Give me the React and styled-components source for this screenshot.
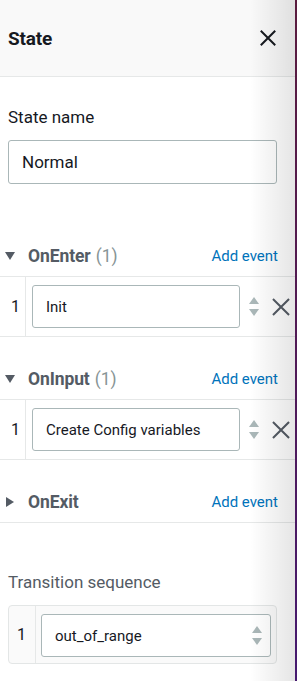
import React from 'react';
import styled, { createGlobalStyle } from 'styled-components';

const GlobalStyle = createGlobalStyle`
  html, body {
    margin: 0;
    padding: 0;
    background: #ffffff;
  }
  body {
    font-family: Roboto, "Noto Sans", sans-serif;
    color: #16191f;
  }
`;

const Screen = styled.div`
  display: flex;
  width: 300px;
  height: 681px;
  overflow: hidden;
`;

const Panel = styled.div`
  position: relative;
  width: 295px;
  height: 681px;
  background: #ffffff;

  &::after {
    content: '';
    position: absolute;
    top: 0;
    right: 0;
    width: 45px;
    height: 100%;
    pointer-events: none;
    background: linear-gradient(90deg, rgba(0, 0, 0, 0) 0%, rgba(0, 0, 0, 0.1) 100%);
  }
`;

const Edge = styled.div`
  width: 2px;
  height: 681px;
  background: linear-gradient(180deg, #5a1b3e 0%, #4f1a5a 60%, #461a70 100%);
`;

const Header = styled.header`
  display: flex;
  align-items: center;
  justify-content: space-between;
  height: 76px;
  padding: 0 19px 0 8px;
  background: #f9f9f9;
  border-bottom: 1px solid #e6e8e8;
`;

const Title = styled.h1`
  margin: 0;
  font-size: 19px;
  font-weight: 700;
  letter-spacing: -0.2px;
  color: #16191f;
`;

const Body = styled.div`
  padding-top: 30px;
`;

const Field = styled.div`
  padding: 0 18px 0 8px;
`;

const Label = styled.div`
  font-size: 17px;
  line-height: 20px;
  color: ${p => (p.$muted ? '#545b64' : '#16191f')};
  margin-bottom: 13px;
`;

const TextBox = styled.div`
  display: flex;
  align-items: center;
  height: 44px;
  box-sizing: border-box;
  padding: 0 13px;
  border: 1px solid #aab7b8;
  border-radius: 3px;
  font-size: 17px;
  color: #16191f;
  background: #ffffff;
`;

const Section = styled.section`
  margin-top: ${p => p.$top}px;
`;

const SectionHead = styled.div`
  display: flex;
  align-items: center;
  height: 28px;
  padding: 0 17px 6px 5px;
  border-bottom: 1px solid #e6e8e8;
`;

const Caret = styled.span`
  display: inline-flex;
  width: 10px;
  margin-right: 13px;
`;

const HeadName = styled.span`
  font-size: 17.5px;
  font-weight: 700;
  color: #545b64;
  letter-spacing: -0.1px;
`;

const Count = styled.span`
  font-size: 17.5px;
  color: #879596;
  margin-left: 5px;
`;

const AddLink = styled.a`
  margin-left: auto;
  font-size: 15px;
  color: #0073bb;
  text-decoration: none;
`;

const EventRow = styled.div`
  display: flex;
  align-items: stretch;
  height: 59px;
  border-bottom: 1px solid #e6e8e8;
`;

const Index = styled.div`
  display: flex;
  align-items: center;
  justify-content: flex-end;
  width: ${p => p.$w}px;
  padding-right: ${p => p.$pr}px;
  box-sizing: border-box;
  border-right: 1px solid #e6e8e8;
  font-size: 16px;
  color: #16191f;
`;

const EventInput = styled.div`
  display: flex;
  align-items: center;
  width: 208px;
  height: 43px;
  margin: 8px 0 0 6px;
  box-sizing: border-box;
  padding: 0 13px;
  border: 1px solid #aab7b8;
  border-radius: 3px;
  font-size: 15px;
  color: #16191f;
`;

const Spinner = styled.div`
  display: flex;
  flex-direction: column;
  justify-content: center;
  gap: 5px;
  margin-left: ${p => p.$ml};
`;

const RemoveBtn = styled.button`
  display: flex;
  align-items: center;
  border: 0;
  background: none;
  padding: 0;
  margin-left: 13px;
  cursor: pointer;
`;

const SeqBox = styled.div`
  display: flex;
  height: 59px;
  box-sizing: border-box;
  border: 1px solid #e3e6e6;
  border-radius: 4px;
  background: #fafafa;
`;

const SeqSelect = styled.div`
  display: flex;
  align-items: center;
  flex: 1;
  height: 43px;
  margin: 8px 5px 0 5px;
  box-sizing: border-box;
  padding: 0 8px 0 13px;
  border: 1px solid #aab7b8;
  border-radius: 3px;
  background: #ffffff;
  font-size: 15px;
  color: #16191f;
`;

const CloseIcon = ({ size, color, width = 2 }) => (
  <svg width={size} height={size} viewBox="0 0 16 16" fill="none">
    <path d="M1.5 1.5 L14.5 14.5 M14.5 1.5 L1.5 14.5" stroke={color} strokeWidth={width} strokeLinecap="square" />
  </svg>
);

const CaretIcon = ({ open }) => (
  <svg width="10" height="10" viewBox="0 0 10 10">
    {open ? (
      <path d="M0 1 H10 L5 9 Z" fill="#545b64" />
    ) : (
      <path d="M1 0 V10 L9 5 Z" fill="#545b64" />
    )}
  </svg>
);

const Arrows = () => (
  <>
    <svg width="10" height="7" viewBox="0 0 10 7">
      <path d="M5 0 L10 7 H0 Z" fill="#aab7b8" />
    </svg>
    <svg width="10" height="7" viewBox="0 0 10 7">
      <path d="M0 0 H10 L5 7 Z" fill="#aab7b8" />
    </svg>
  </>
);

const EventSection = ({ name, count, open, top, items = [] }) => (
  <Section $top={top}>
    <SectionHead>
      <Caret><CaretIcon open={open} /></Caret>
      <HeadName>{name}</HeadName>
      {count != null && <Count>({count})</Count>}
      <AddLink href="#">Add event</AddLink>
    </SectionHead>
    {items.map((item, i) => (
      <EventRow key={item}>
        <Index $w={26} $pr={5}>{i + 1}</Index>
        <EventInput>{item}</EventInput>
        <Spinner $ml="9px"><Arrows /></Spinner>
        <RemoveBtn aria-label="Remove">
          <CloseIcon size={18} color="#545b64" width={1.8} />
        </RemoveBtn>
      </EventRow>
    ))}
  </Section>
);

export default function App() {
  return (
    <>
      <GlobalStyle />
      <Screen>
        <Panel>
          <Header>
            <Title>State</Title>
            <CloseIcon size={16} color="#16191f" width={2} />
          </Header>
          <Body>
            <Field>
              <Label>State name</Label>
              <TextBox>Normal</TextBox>
            </Field>
            <EventSection name="OnEnter" count={1} open top={58} items={['Init']} />
            <EventSection name="OnInput" count={1} open top={28} items={['Create Config variables']} />
            <EventSection name="OnExit" top={28} />
            <Section $top={49}>
              <Field>
                <Label $muted>Transition sequence</Label>
                <SeqBox>
                  <Index $w={27} $pr={9}>1</Index>
                  <SeqSelect>
                    out_of_range
                    <Spinner $ml="auto"><Arrows /></Spinner>
                  </SeqSelect>
                </SeqBox>
              </Field>
            </Section>
          </Body>
        </Panel>
        <Edge />
      </Screen>
    </>
  );
}
